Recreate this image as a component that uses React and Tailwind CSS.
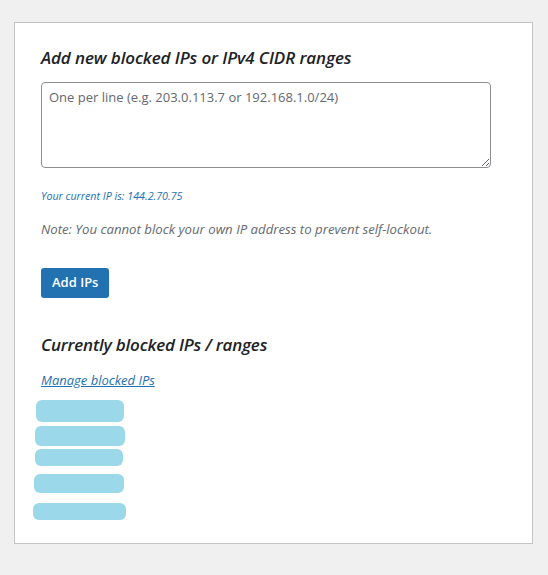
export default function App() {
  const blurred = [
    { w: 'w-[88px]', h: 'h-[22px]', ml: 'ml-[21px]', mt: 'mt-[9px]' },
    { w: 'w-[90px]', h: 'h-[20px]', ml: 'ml-[20px]', mt: 'mt-[4px]' },
    { w: 'w-[88px]', h: 'h-[17px]', ml: 'ml-[20px]', mt: 'mt-[3px]' },
    { w: 'w-[90px]', h: 'h-[19px]', ml: 'ml-[19px]', mt: 'mt-[8px]' },
    { w: 'w-[93px]', h: 'h-[17px]', ml: 'ml-[18px]', mt: 'mt-[10px]' },
  ]

  return (
    <div className="min-h-[575px] bg-[#f0f0f1] pt-[22px] pl-[14px] font-['Open_Sans',sans-serif]">
      <div className="w-[519px] h-[522px] border border-[#c3c4c7] bg-white">
        <div className="pl-[26px] pt-[23px]">
          <h2 className="text-[17px] font-semibold italic leading-[24px] tracking-[-0.1px] text-[#1d2327]">
            Add new blocked IPs or IPv4 CIDR ranges
          </h2>
          <textarea
            className="mt-[12px] block h-[86px] w-[450px] resize-y rounded-[4px] border border-[#8c8f94] px-[7px] py-[4px] text-[13px] leading-[20px] text-[#2c3338] placeholder:text-[#646970] outline-none"
            placeholder="One per line (e.g. 203.0.113.7 or 192.168.1.0/24)"
          />
          <p className="mt-[20px] text-[10.7px] italic leading-[16px] text-[#2271b1]">
            Your current IP is: 144.2.70.75
          </p>
          <p className="mt-[16px] text-[13.2px] italic leading-[18px] text-[#646970]">
            Note: You cannot block your own IP address to prevent self-lockout.
          </p>
          <button
            type="button"
            className="mt-[30px] h-[30px] rounded-[3px] bg-[#2271b1] px-[11px] text-[13px] font-semibold text-white"
          >
            Add IPs
          </button>
          <h2 className="mt-[35px] text-[17px] font-semibold italic leading-[24px] tracking-[-0.2px] text-[#1d2327]">
            Currently blocked IPs / ranges
          </h2>
          <a
            href="#"
            className="mt-[14px] inline-block text-[13px] italic leading-[18px] text-[#2271b1] underline"
          >
            Manage blocked IPs
          </a>
        </div>
        <div className="flex flex-col">
          {blurred.map((b, i) => (
            <div key={i} className={`${b.w} ${b.h} ${b.ml} ${b.mt} rounded-[6px] bg-[#9bd9ea]`} />
          ))}
        </div>
      </div>
    </div>
  )
}
